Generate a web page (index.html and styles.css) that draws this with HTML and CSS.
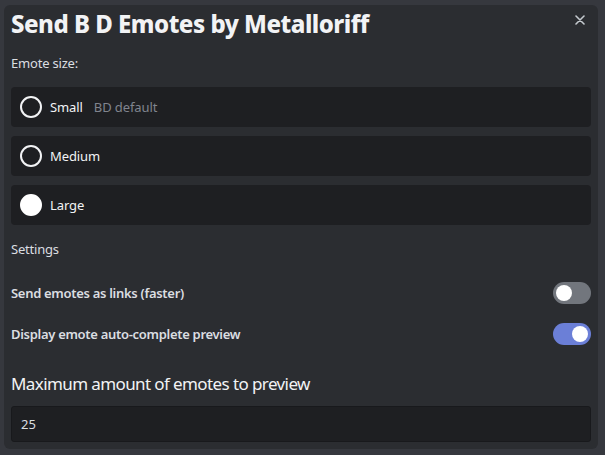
FILE: index.html
```html
<!DOCTYPE html>
<html>
<head>
<meta charset="utf-8">
<link rel="stylesheet" href="styles.css">
</head>
<body>
<div class="modal">
  <div class="header">
    <h1 class="title">Send B D Emotes by Metalloriff</h1>
    <button class="close" aria-label="Close">
      <svg width="10" height="10" viewBox="0 0 10 10"><path d="M1 1L9 9M9 1L1 9" stroke="#c4c9ce" stroke-width="1.6" stroke-linecap="round"/></svg>
    </button>
  </div>
  <div class="label">Emote size:</div>
  <div class="radios">
    <div class="radio-row"><span class="radio"></span><span class="radio-text">Small</span><span class="radio-desc">BD default</span></div>
    <div class="radio-row"><span class="radio"></span><span class="radio-text">Medium</span></div>
    <div class="radio-row"><span class="radio checked"></span><span class="radio-text">Large</span></div>
  </div>
  <div class="label settings">Settings</div>
  <div class="switch-row">
    <span class="switch-label">Send emotes as links (faster)</span>
    <span class="switch"><span class="knob"></span></span>
  </div>
  <div class="switch-row">
    <span class="switch-label">Display emote auto-complete preview</span>
    <span class="switch on"><span class="knob"></span></span>
  </div>
  <div class="field-title">Maximum amount of emotes to preview</div>
  <div class="input">25</div>
</div>
</body>
</html>
```
FILE: styles.css
```css
* { box-sizing: border-box; }
html, body { margin: 0; padding: 0; }
body {
  background: #36383e;
  width: 605px;
  height: 455px;
  padding: 5px 7px 6px 4px;
  font-family: "Noto Sans", "Open Sans", sans-serif;
  color: #dbdee1;
}
.modal {
  background: #2b2d31;
  border-radius: 6px;
  height: 444px;
  padding: 0 7px 0 7px;
  display: flex;
  flex-direction: column;
}
.header {
  display: flex;
  justify-content: space-between;
  align-items: flex-start;
  height: 38px;
}
.title {
  margin: 0;
  padding-top: 4px;
  font-size: 24px;
  line-height: 30px;
  font-weight: 800;
  color: #f2f3f5;
  letter-spacing: -0.5px;
}
.close {
  background: none;
  border: 0;
  padding: 0;
  margin: 9px 5px 0 0;
  width: 12px;
  height: 12px;
  display: flex;
  align-items: center;
  justify-content: center;
}
.label {
  font-size: 13px;
  line-height: 16px;
  margin-top: 12px;
  color: #dbdee1;
  letter-spacing: -0.2px;
}
.radios {
  display: flex;
  flex-direction: column;
  gap: 9px;
  margin-top: 16px;
}
.radio-row {
  background: #1e1f22;
  border-radius: 4px;
  height: 40px;
  display: flex;
  align-items: center;
  padding-left: 9px;
}
.radio {
  width: 22px;
  height: 22px;
  border: 2px solid #f2f3f5;
  border-radius: 50%;
  margin-right: 8px;
}
.radio.checked { background: #fff; border-color: #fff; }
.radio-text {
  font-size: 13px;
  font-weight: 400;
  color: #f2f3f5;
  letter-spacing: -0.1px;
}
.radio-desc {
  font-size: 13px;
  color: #80848e;
  margin-left: 11px;
  letter-spacing: -0.1px;
}
.settings { margin-top: 16px; }
.switch-row {
  display: flex;
  justify-content: space-between;
  align-items: center;
  height: 22px;
}
.settings + .switch-row { margin-top: 25px; }
.switch-row + .switch-row { margin-top: 19px; }
.switch-label {
  font-size: 13px;
  font-weight: 600;
  color: #dbdee1;
  letter-spacing: -0.3px;
}
.switch {
  width: 38px;
  height: 22px;
  border-radius: 11px;
  background: #72767d;
  position: relative;
  display: block;
}
.switch.on { background: #6b7fd7; }
.knob {
  position: absolute;
  top: 3px;
  left: 3px;
  width: 16px;
  height: 16px;
  border-radius: 50%;
  background: #fff;
}
.switch.on .knob { left: 19px; }
.field-title {
  font-size: 17px;
  line-height: 22px;
  margin-top: 28px;
  color: #f2f3f5;
  letter-spacing: -0.6px;
}
.input {
  margin-top: 11px;
  height: 36px;
  background: #1e1f22;
  border: 1px solid #18191c;
  border-radius: 3px;
  padding-left: 9px;
  display: flex;
  align-items: center;
  font-size: 13px;
  color: #dbdee1;
}
```
